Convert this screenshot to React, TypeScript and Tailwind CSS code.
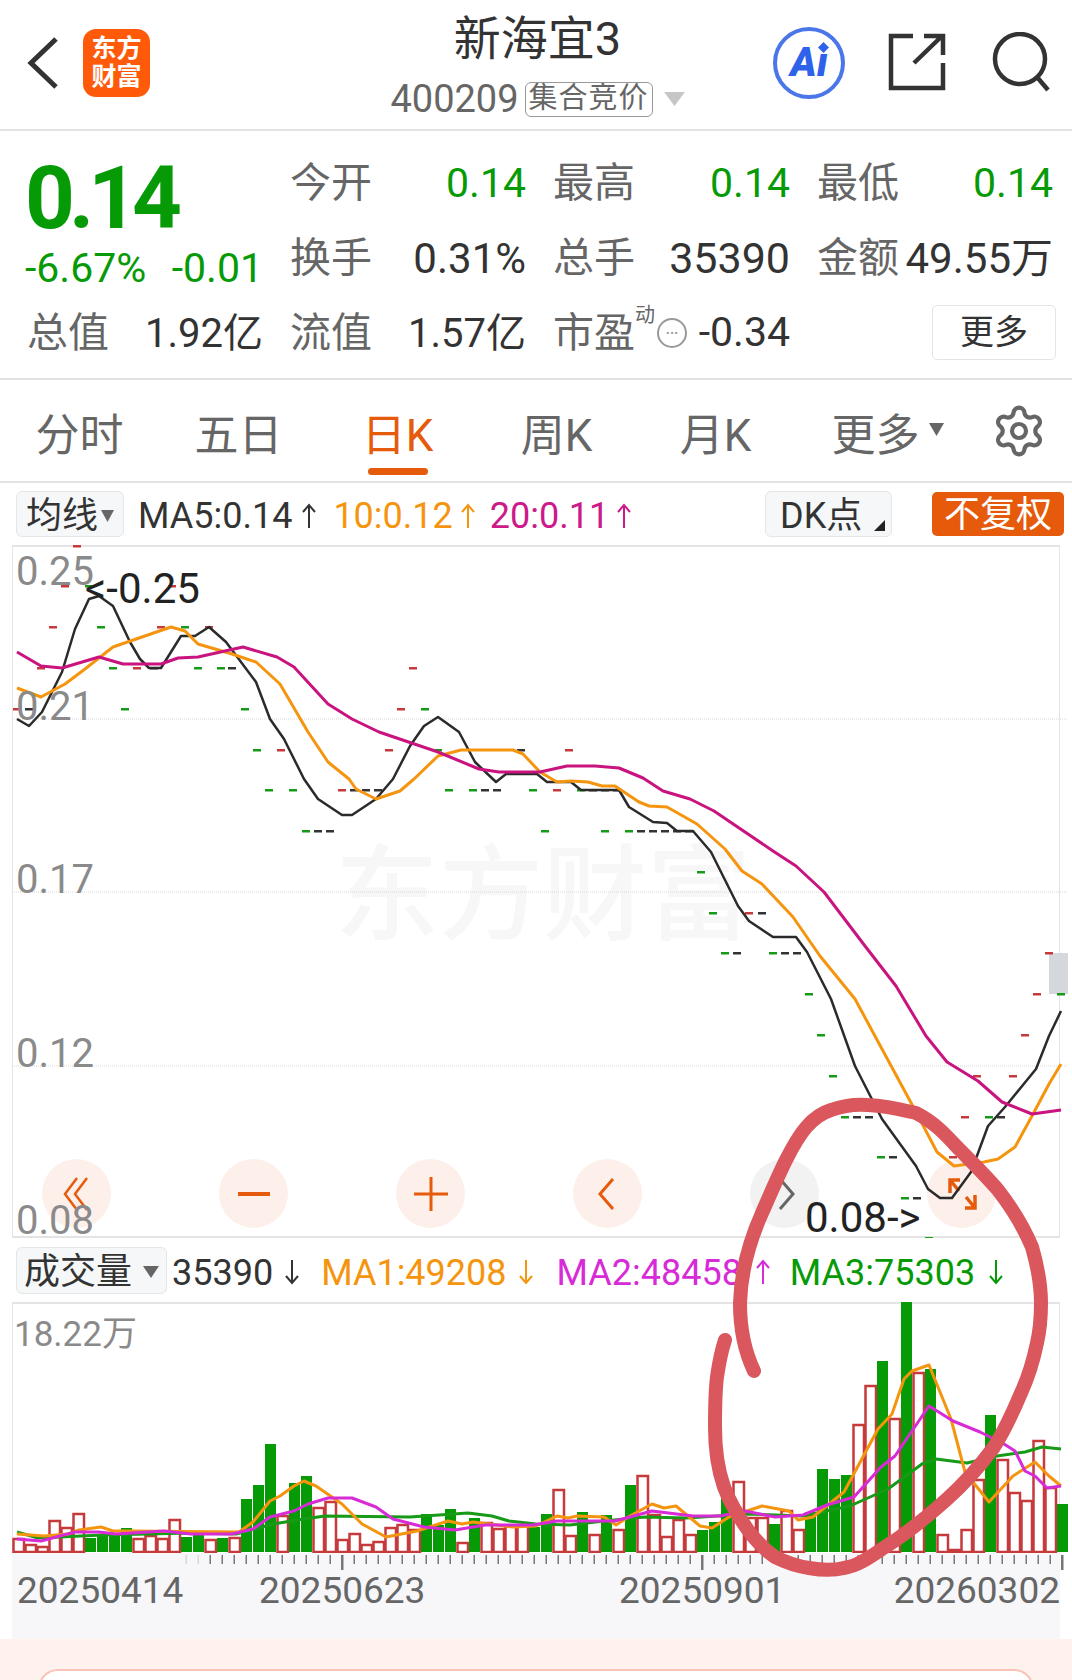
import { Settings } from "lucide-react";

const SANS = "font-['Roboto','Noto_Sans_CJK_SC',sans-serif]";

const GREEN = "#079a07";
const RED = "#c63a3c";

// moving averages on the day chart, page coordinates
const ma5 = [17,720,29,727,42,713,62,673,75,630,89,600,99,597,113,607,130,643,140,660,149,669,161,669,181,637,195,637,209,628,226,643,256,683,270,720,284,740,304,780,318,800,342,816,352,816,376,800,393,780,410,747,424,727,438,718,459,733,475,763,496,783,506,775,537,775,547,783,571,783,581,791,619,791,629,808,653,823,667,824,677,832,693,832,711,853,738,907,749,922,773,938,796,938,807,953,831,1000,855,1067,882,1120,916,1167,928,1190,940,1199,952,1199,971,1173,988,1127,1005,1108,1036,1070,1049,1037,1061,1012];
const ma10 = [17,689,41,698,65,685,85,670,113,648,171,628,185,632,198,645,232,655,256,663,280,685,308,733,328,763,349,780,356,790,376,800,400,792,414,780,438,757,461,751,513,751,523,755,540,773,557,783,571,782,588,783,602,787,615,787,639,803,649,807,667,808,697,825,725,850,742,872,762,885,793,918,820,957,855,1000,889,1063,916,1113,937,1153,954,1167,984,1163,998,1160,1015,1148,1032,1117,1049,1085,1061,1065];
const ma20 = [17,653,41,667,62,669,99,658,123,665,161,665,178,659,198,658,243,648,277,658,294,668,328,705,352,720,379,733,438,753,479,770,499,773,540,773,567,767,595,767,619,769,643,779,663,792,690,800,714,812,773,852,796,867,824,893,865,947,896,987,926,1037,947,1063,978,1082,1002,1103,1032,1115,1061,1111];

// small day markers: row y, then colour letter + x
const marks: [number, string][] = [
  [547, "r77"],
  [587, "r65 g89 r172"],
  [628, "r53 g101 r161 g185 r209"],
  [669, "r41 g113 r137 k154 g198 g221 k232 r413"],
  [710, "r17 k29 g125 g245 r401 g425"],
  [751, "g257 r281 r389 g438 k521 r569"],
  [791, "g269 g293 r342 k354 k366 k378 g449 g473 k485 k497 g533 r557 g581 k593 k605 k617"],
  [832, "g306 k318 k330 g545 g605 g629 k641 k653 k665 k677 k689"],
  [873, "g701"],
  [914, "g713 r749 k762"],
  [954, "g725 k737 g773 k785 k797 r1049"],
  [995, "g809 r1037 g1061"],
  [1036, "g821 r1025"],
  [1077, "g833 r977 r1013"],
  [1118, "g845 k857 k869 r965 g989 k1001"],
  [1158, "g881 k893 r953"],
  [1199, "g905 k917"],
  [1239, "g929"],
];
const markColor: Record<string, string> = { r: "#c63a3c", g: "#179a17", k: "#333333" };

// volume bars, left to right: height, g = filled down day
const bars = "14 8 6 32 25 39 g14 g17 g17 g24 14 17 14 33 g15 g18 13 g14 15 g53 g67 g108 37 g69 g76 45 51 13 19 8 11 25 28 23 g38 g27 g43 10 g34 30 24 27 27 g25 g38 63 17 g40 18 g37 23 g67 77 38 16 33 18 g22 g30 g60 71 35 35 g28 42 23 g40 g83 g73 g77 128 167 g191 134 g250 180 g183 18 3 23 73 g137 93 60 52 112 65 g48".split(" ");

const vol1 = [17,1535,44,1537,68,1535,79,1531,101,1528,113,1532,130,1532,239,1533,253,1523,270,1502,280,1497,294,1487,304,1482,316,1487,342,1505,362,1525,386,1538,417,1532,448,1522,462,1525,473,1523,489,1525,513,1528,536,1527,557,1517,568,1519,577,1517,604,1518,616,1526,630,1517,652,1505,664,1509,676,1507,700,1527,712,1529,729,1518,762,1507,789,1512,798,1521,813,1518,844,1493,878,1430,892,1415,904,1380,912,1372,929,1366,951,1420,965,1473,989,1503,1013,1477,1035,1463,1049,1477,1061,1487];
const vol2 = [17,1540,41,1542,75,1533,99,1533,116,1535,164,1532,191,1535,232,1535,253,1530,270,1518,294,1512,308,1505,328,1499,352,1499,376,1508,393,1520,424,1528,455,1531,485,1526,533,1526,557,1522,580,1522,615,1522,652,1512,693,1517,720,1517,745,1512,775,1518,803,1516,827,1506,854,1498,881,1468,895,1457,929,1407,953,1422,980,1433,1004,1445,1015,1452,1025,1472,1035,1477,1047,1489,1061,1487];
const vol3 = [17,1533,38,1539,103,1536,191,1534,236,1535,273,1525,304,1520,325,1517,410,1518,468,1514,492,1517,509,1522,536,1525,570,1526,604,1522,645,1518,686,1519,748,1515,803,1517,850,1507,888,1490,922,1465,936,1460,967,1464,997,1457,1025,1453,1042,1448,1061,1450];

// red pen stroke circled over both charts
const penStroke = "M754 1371 C745 1352 740 1330 740 1303 C741 1270 750 1240 762 1213 C770 1195 777 1178 786 1160 C800 1132 812 1116 831 1110 C845 1105 856 1104 868 1105 C888 1106 903 1110 916 1113 C934 1122 946 1135 957 1147 C972 1162 986 1176 998 1190 C1012 1208 1024 1228 1032 1247 C1038 1268 1041 1285 1041 1303 C1041 1318 1040 1330 1037 1343 C1033 1362 1028 1378 1021 1393 C1013 1412 1005 1430 994 1447 C980 1466 964 1484 946 1500 C928 1516 906 1534 885 1547 C870 1557 858 1566 844 1568 C832 1571 820 1570 809 1568 C796 1566 785 1562 775 1557 C765 1550 756 1541 748 1530 C738 1516 730 1503 724 1487 C717 1467 715 1447 715 1427 C715 1410 715 1393 717 1377 C719 1363 721 1352 725 1340";

function line(points: number[]) {
  const out: string[] = [];
  for (let i = 0; i < points.length; i += 2) out.push(`${points[i]},${points[i + 1]}`);
  return out.join(" ");
}

function Caret({ className = "" }: { className?: string }) {
  return (
    <svg viewBox="0 0 10 10" preserveAspectRatio="none" className={className}>
      <path d="M0 0h10L5 10z" fill="currentColor" />
    </svg>
  );
}

// thin trend arrow after each legend value
function Trend({ down, className = "" }: { down?: boolean; className?: string }) {
  return (
    <svg viewBox="0 0 14 26" className={`h-[26px] w-[14px] translate-y-[2px] ${className}`} fill="none" stroke="currentColor" strokeWidth="2">
      <path d={down ? "M7 1 V24 M1 17 L7 24 L13 17" : "M7 25 V2 M1 9 L7 2 L13 9"} />
    </svg>
  );
}

function Stat({ label, value, green, size = "text-[42px]" }: { label: string; value: string; green?: boolean; size?: string }) {
  return (
    <div className="flex items-center justify-between">
      <span className="translate-y-[1px] text-[41px] text-[#666]">{label}</span>
      <span className={`translate-y-[1px] ${size} ${green ? "text-[#079a07]" : "text-[#333]"}`}>{value}</span>
    </div>
  );
}

function Tab({ label, active }: { label: string; active?: boolean }) {
  return (
    <div className={`relative flex h-full w-[159px] items-center justify-center pt-[10px] text-[44px] ${active ? "text-[#e65a0c]" : "text-[#666]"}`}>
      {label}
      {active && <div className="absolute bottom-[6px] left-0 right-0 mx-auto h-[7px] w-[60px] rounded-full bg-[#e65a0c]" />}
    </div>
  );
}

function RoundButton({ gray, children }: { gray?: boolean; children: React.ReactNode }) {
  return (
    <div className={`flex h-[69px] w-[69px] items-center justify-center rounded-full ${gray ? "bg-[#f2f2f2] text-[#666]" : "bg-[#fdf0ea] text-[#e65a0c]"}`}>
      <svg viewBox="0 0 34 34" className="h-[34px] w-[34px]" fill="none" stroke="currentColor" strokeWidth="3">
        {children}
      </svg>
    </div>
  );
}

function Header() {
  return (
    <header className="relative flex h-[131px] shrink-0 items-center border-b-2 border-[#e2e2e2]">
      <svg viewBox="0 0 32 52" className="ml-[27px] h-[52px] w-[32px] -translate-y-[2px]" fill="none" stroke="#333" strokeWidth="5">
        <path d="M29 2 L4 26 L29 50" />
      </svg>
      <div className="ml-[24px] flex h-[68px] w-[67px] -translate-y-[2px] flex-col items-center justify-center rounded-[13px] bg-[#ff5a0a] text-[25px] font-bold leading-[28px] text-white">
        <span>东方</span>
        <span>财富</span>
      </div>
      <div className="absolute left-[391px] top-[12px] flex w-[293px] flex-col items-center">
        <div className="text-[47px] leading-[54px] text-[#333]">新海宜3</div>
        <div className="mt-[11px] flex items-center">
          <span className="text-[38px] leading-[44px] text-[#666]">400209</span>
          <span className="ml-[6px] flex h-[35px] w-[128px] items-center justify-center rounded-[6px] border border-[#999] text-[29px] tracking-[1px] text-[#666]">集合竞价</span>
          <Caret className="ml-[11px] h-[14px] w-[21px] text-[#c6c6c6]" />
        </div>
      </div>
      <div className="absolute left-[773px] top-[27px] flex h-[72px] w-[72px] items-center justify-center rounded-full border-[4px] border-[#4a76ea]">
        <span className="relative text-[40px] font-black italic leading-none text-[#2f62ea]">
          Aı
          <svg viewBox="0 0 10 10" className="absolute right-[-1px] top-[-1px] h-[11px] w-[11px]">
            <path d="M5 0 L10 5 L5 10 L0 5z" fill="currentColor" />
          </svg>
        </span>
      </div>
      <svg viewBox="0 0 58 58" className="absolute left-[888px] top-[33px] h-[58px] w-[58px]" fill="none" stroke="#333" strokeWidth="4.5">
        <path d="M25 3 H3 V55 H55 V30" />
        <path d="M26 30 L53 4 M36 3 H55 V22" />
      </svg>
      <svg viewBox="0 0 60 60" className="absolute left-[991px] top-[32px] h-[60px] w-[60px]" fill="none" stroke="#333" strokeWidth="4.5">
        <circle cx="29" cy="27" r="25" />
        <path d="M46 45 L57 58" />
      </svg>
    </header>
  );
}

function Quote() {
  return (
    <section className="grid h-[249px] shrink-0 grid-cols-[236px_236px_237px_236px] grid-rows-[75px_75px_75px] content-start gap-x-[27px] border-b-2 border-[#e2e2e2] px-[27px] pt-[14px]">
      <div className="row-span-2 flex flex-col text-[#079a07]">
        <div className="-ml-[2px] mt-[7px] text-[87px] font-bold leading-[92px] tracking-[-6px]">0.14</div>
        <div className="-ml-[2px] mt-[2px] flex justify-between text-[41px] leading-[44px]">
          <span>-6.67%</span>
          <span>-0.01</span>
        </div>
      </div>
      <Stat label="今开" value="0.14" size="text-[41px]" green />
      <Stat label="最高" value="0.14" size="text-[41px]" green />
      <Stat label="最低" value="0.14" size="text-[41px]" green />
      <Stat label="换手" value="0.31%" />
      <Stat label="总手" value="35390" size="text-[43px]" />
      <Stat label="金额" value="49.55万" />
      <Stat label="总值" value="1.92亿" size="text-[40px]" />
      <Stat label="流值" value="1.57亿" size="text-[40px]" />
      <div className="flex items-center">
        <span className="translate-y-[1px] text-[41px] text-[#666]">市盈</span>
        <span className="-mt-[36px] text-[20px] text-[#666]">动</span>
        <span className="ml-[2px] flex h-[30px] w-[30px] items-center justify-center rounded-full border-2 border-[#999] text-[14px] font-bold leading-none text-[#999]">···</span>
        <span className="ml-auto text-[41px] text-[#333]">-0.34</span>
      </div>
      <div className="flex items-center justify-end">
        <div className="flex h-[55px] w-[124px] translate-x-[3px] items-center justify-center rounded-[5px] border border-[#e4e4e4] text-[34px] text-[#333]">更多</div>
      </div>
    </section>
  );
}

function Tabs() {
  return (
    <nav className="flex h-[103px] shrink-0 items-center border-b-2 border-[#e2e2e2]">
      <Tab label="分时" />
      <Tab label="五日" />
      <Tab label="日K" active />
      <Tab label="周K" />
      <Tab label="月K" />
      <div className="flex h-full w-[159px] items-center justify-center pl-[26px] pt-[10px] text-[44px] text-[#666]">
        更多
        <Caret className="ml-[9px] h-[13px] w-[15px] -translate-y-[6px]" />
      </div>
      <Settings className="ml-[37px] h-[56px] w-[56px] text-[#666]" strokeWidth={1.8} />
    </nav>
  );
}

function KLineLegend() {
  return (
    <div className="flex h-[62px] shrink-0 items-center pl-[16px] text-[36px]">
      <div className="flex h-[46px] w-[108px] items-center justify-center rounded-[6px] border border-[#e6e6e6] bg-[#f6f7f9] pt-[3px] text-[#333]">
        均线
        <Caret className="ml-[3px] h-[12px] w-[13px] text-[#666]" />
      </div>
      <span className="ml-[14px] translate-y-[2px] text-[#333]">MA5:0.14</span>
      <Trend className="ml-[10px] text-[#333]" />
      <span className="ml-[17px] translate-y-[2px] text-[#f5950f]">10:0.12</span>
      <Trend className="ml-[8px] text-[#f5950f]" />
      <span className="ml-[15px] translate-y-[2px] text-[#cc1a8a]">20:0.11</span>
      <Trend className="ml-[8px] text-[#cc1a8a]" />
      <div className="relative ml-auto flex h-[46px] w-[127px] items-center rounded-[6px] border border-[#e6e6e6] bg-[#f6f7f9] pl-[14px] pt-[3px] text-[#333]">
        DK点
        <svg viewBox="0 0 10 10" className="absolute bottom-[5px] right-[6px] h-[11px] w-[11px]">
          <path d="M10 0V10H0z" fill="#222" />
        </svg>
      </div>
      <div className="ml-[40px] mr-[8px] flex h-[44px] w-[132px] items-center justify-center rounded-[5px] bg-[#e65a0c] pt-[2px] text-white">不复权</div>
    </div>
  );
}

function KLineChart() {
  return (
    <div className="relative mx-[12px] h-[693px] shrink-0 border-x border-y-2 border-[#e4e4e4]">
      <div className="absolute left-[322px] top-[295px] text-[104px] font-medium leading-[110px] text-[#f7f7f7]">东方财富</div>
      <div className="absolute left-[29px] top-[612px] flex w-[954px] justify-between">
        <RoundButton>
          <path d="M17 1 L5 17 L17 33 M27 1 L15 17 L27 33" strokeWidth="2.5" />
        </RoundButton>
        <RoundButton>
          <path d="M1 17 H33" strokeWidth="4" />
        </RoundButton>
        <RoundButton>
          <path d="M0 17 H34 M17 0 V34" />
        </RoundButton>
        <RoundButton>
          <path d="M22 2 L9 17 L22 32" />
        </RoundButton>
        <RoundButton gray>
          <path d="M12 2 L25 17 L12 32" />
        </RoundButton>
        <RoundButton>
          <path d="M5 16 V3 H15 M5 3 L14 14 M30 18 V31 H20 M30 31 L21 20" strokeWidth="3.5" />
        </RoundButton>
      </div>
      <svg viewBox="12 546 1056 693" className="absolute left-[-1px] top-[-2px] h-[693px] w-[1056px]" fill="none">
        {[720, 893, 1067].map((y) => (
          <line key={y} x1="12" x2="1068" y1={y} y2={y} stroke="#d8d8d8" strokeDasharray="1 1" />
        ))}
        <rect x="1049" y="954" width="19" height="41" fill="#d4d7dc" />
        {marks.map(([y, row]) =>
          row.split(" ").map((m) => (
            <rect key={`${y}-${m}`} x={Number(m.slice(1)) - 4} y={y - 1} width="8" height="2.5" fill={markColor[m[0]]} />
          )),
        )}
        <polyline points={line(ma5)} stroke="#2b2b2b" strokeWidth="2.5" strokeLinejoin="round" />
        <polyline points={line(ma10)} stroke="#f5950f" strokeWidth="3" strokeLinejoin="round" />
        <polyline points={line(ma20)} stroke="#c9137f" strokeWidth="3" strokeLinejoin="round" />
      </svg>
      <span className="absolute left-[3px] top-[3px] text-[40px] leading-[44px] text-[#8a8a8a]">0.25</span>
      <span className="absolute left-[3px] top-[138px] text-[40px] leading-[44px] text-[#8a8a8a]">0.21</span>
      <span className="absolute left-[3px] top-[311px] text-[40px] leading-[44px] text-[#8a8a8a]">0.17</span>
      <span className="absolute left-[3px] top-[485px] text-[40px] leading-[44px] text-[#8a8a8a]">0.12</span>
      <span className="absolute left-[3px] top-[652px] text-[40px] leading-[44px] text-[#8a8a8a]">0.08</span>
      <span className="absolute left-[72px] top-[20px] text-[42px] leading-[44px] text-[#222]">&lt;-0.25</span>
      <span className="absolute left-[792px] top-[649px] text-[42px] leading-[44px] text-[#222]">0.08-&gt;</span>
    </div>
  );
}

function VolumeLegend() {
  return (
    <div className="flex h-[64px] shrink-0 items-center pl-[16px] text-[36px]">
      <div className="flex h-[47px] w-[151px] items-center justify-center rounded-[6px] border border-[#e6e6e6] bg-[#f6f7f9] pt-[4px] text-[#333]">
        成交量
        <Caret className="ml-[11px] h-[12px] w-[16px] text-[#666]" />
      </div>
      <span className="ml-[5px] translate-y-[3px] text-[#333]">35390</span>
      <Trend down className="ml-[12px] text-[#333]" />
      <span className="ml-[22px] translate-y-[3px] text-[#f5950f]">MA1:49208</span>
      <Trend down className="ml-[12px] text-[#f5950f]" />
      <span className="ml-[24px] translate-y-[3px] text-[#d62bd6]">MA2:48458</span>
      <Trend className="ml-[14px] text-[#d62bd6]" />
      <span className="ml-[20px] translate-y-[3px] text-[#079a07]">MA3:75303</span>
      <Trend down className="ml-[14px] text-[#079a07]" />
    </div>
  );
}

function VolumeChart() {
  return (
    <div className="relative mx-[12px] h-[251px] shrink-0 border-x border-t-2 border-[#e4e4e4]">
      <svg viewBox="12 1303 1056 251" className="absolute left-[-1px] top-[-2px] h-[251px] w-[1056px]" fill="none">
        {bars.map((b, i) => {
          const isGreen = b[0] === "g";
          const h = Number(isGreen ? b.slice(1) : b);
          const x = 12.5 + i * 12;
          return isGreen ? (
            <rect key={i} x={x + 0.5} y={1553 - h} width="11" height={h} fill={GREEN} />
          ) : (
            <rect key={i} x={x + 1} y={1554 - h} width="10.5" height={h - 1} fill="#fff" stroke={RED} strokeWidth="2.5" />
          );
        })}
        <polyline points={line(vol3)} stroke="#179a17" strokeWidth="3" strokeLinejoin="round" />
        <polyline points={line(vol1)} stroke="#f5950f" strokeWidth="3" strokeLinejoin="round" />
        <polyline points={line(vol2)} stroke="#d62bd6" strokeWidth="3" strokeLinejoin="round" />
      </svg>
      <span className="absolute left-[1px] top-[9px] text-[35px] leading-[44px] text-[#8a8a8a]">18.22万</span>
    </div>
  );
}

function DateAxis() {
  const ticks: number[] = [];
  for (let x = 186; x <= 1062; x += 12) ticks.push(x);
  return (
    <div className="relative mx-[12px] h-[86px] shrink-0 bg-[#f7f7fa]">
      <svg viewBox="12 1554 1056 30" className="absolute left-0 top-0 h-[30px] w-[1056px]">
        {ticks.map((x) => {
          const major = x === 342 || x === 702 || x === 1062;
          return (
            <rect key={x} x={x - (major ? 1 : 0.5)} y="1556" width={major ? 2.5 : 1.5} height={major ? 15 : 9} fill={x < 200 ? "#d8d8d8" : "#777"} />
          );
        })}
      </svg>
      <div className="absolute left-[5px] right-0 top-[16px] text-[37px] leading-[44px] text-[#666]">
        <span className="absolute left-0">20250414</span>
        <span className="absolute left-[242px]">20250623</span>
        <span className="absolute left-[602px]">20250901</span>
        <span className="absolute right-0">20260302</span>
      </div>
    </div>
  );
}

export default function App() {
  return (
    <div className={`relative flex h-[1680px] w-[1072px] flex-col overflow-hidden bg-white ${SANS}`}>
      <Header />
      <Quote />
      <Tabs />
      <KLineLegend />
      <KLineChart />
      <VolumeLegend />
      <VolumeChart />
      <DateAxis />
      <div className="flex-1 bg-[#fff2ee] px-[38px] pt-[30px]">
        <div className="h-[20px] rounded-t-[20px] border-x-2 border-t-2 border-[#f8c4b8] bg-white" />
      </div>
      <svg viewBox="0 0 1072 1680" className="pointer-events-none absolute left-0 top-0 h-[1680px] w-[1072px]" fill="none">
        <path d={penStroke} stroke="#d9575d" strokeWidth="14" strokeLinecap="round" strokeLinejoin="round" />
      </svg>
    </div>
  );
}
